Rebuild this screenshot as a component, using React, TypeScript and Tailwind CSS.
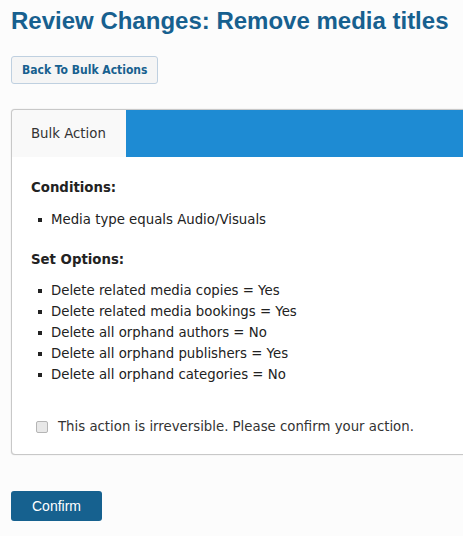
import React from 'react';

const conditions = ['Media type equals Audio/Visuals'];

const options = [
  'Delete related media copies = Yes',
  'Delete related media bookings = Yes',
  'Delete all orphand authors = No',
  'Delete all orphand publishers = Yes',
  'Delete all orphand categories = No',
];

export default function App() {
  return (
    <div className="min-h-[536px] w-[463px] overflow-hidden bg-[#fcfcfc] px-[11px] pt-[6px]">
      <h1 className="whitespace-nowrap font-['Liberation_Sans',Arial,sans-serif] text-[24px] font-bold leading-[30px] text-[#17608f]">
        Review Changes: Remove media titles
      </h1>

      <button className="mt-[20px] h-[28px] rounded-[3px] border border-[#bfd0e0] bg-[#f5f5f5] px-[10px] font-['DejaVu_Sans_Condensed','DejaVu_Sans',sans-serif] text-[12px] font-bold text-[#17608f]">
        Back To Bulk Actions
      </button>

      {/* Panel */}
      <div className="mt-[25px] mr-[-20px] rounded-[4px] border border-[#c8c8c8] bg-white shadow-[0_0_1px_rgba(0,0,0,0.25)] font-['DejaVu_Sans',Verdana,sans-serif] text-[13.3px] text-[#222]">
        <div className="flex h-[47px] overflow-hidden rounded-t-[4px]">
          <div className="flex w-[114px] items-center pl-[19px] bg-[#f9f9f9] text-[#333]">Bulk Action</div>
          <div className="flex-1 bg-[#1e8bd3]" />
        </div>

        <div className="px-[19px] pt-[22px] pb-[18px]">
          <div className="font-bold leading-[18px]">Conditions:</div>
          <ul className="mt-[12px] pl-[20px]">
            {conditions.map((c) => (
              <li key={c} className="relative leading-[21px]">
                <span className="absolute left-[-13px] top-[9px] h-[4px] w-[4px] bg-[#222]" />
                {c}
              </li>
            ))}
          </ul>

          <div className="mt-[21px] font-bold leading-[18px]">Set Options:</div>
          <ul className="mt-[11px] pl-[20px]">
            {options.map((o) => (
              <li key={o} className="relative leading-[21px]">
                <span className="absolute left-[-13px] top-[9px] h-[4px] w-[4px] bg-[#222]" />
                {o}
              </li>
            ))}
          </ul>

          <label className="mt-[33px] flex items-center">
            <input type="checkbox" className="ml-[5px] h-[12px] w-[12px] appearance-none rounded-[2px] border border-[#b5b5b5] bg-[#e8e8e8]" />
            <span className="ml-[10px] leading-[18px] text-[#333]">This action is irreversible. Please confirm your action.</span>
          </label>
        </div>
      </div>

      <button className="mt-[36px] h-[30px] w-[91px] rounded-[3px] bg-[#16618f] font-['Liberation_Sans',Arial,sans-serif] text-[14px] text-white">
        Confirm
      </button>
    </div>
  );
}
